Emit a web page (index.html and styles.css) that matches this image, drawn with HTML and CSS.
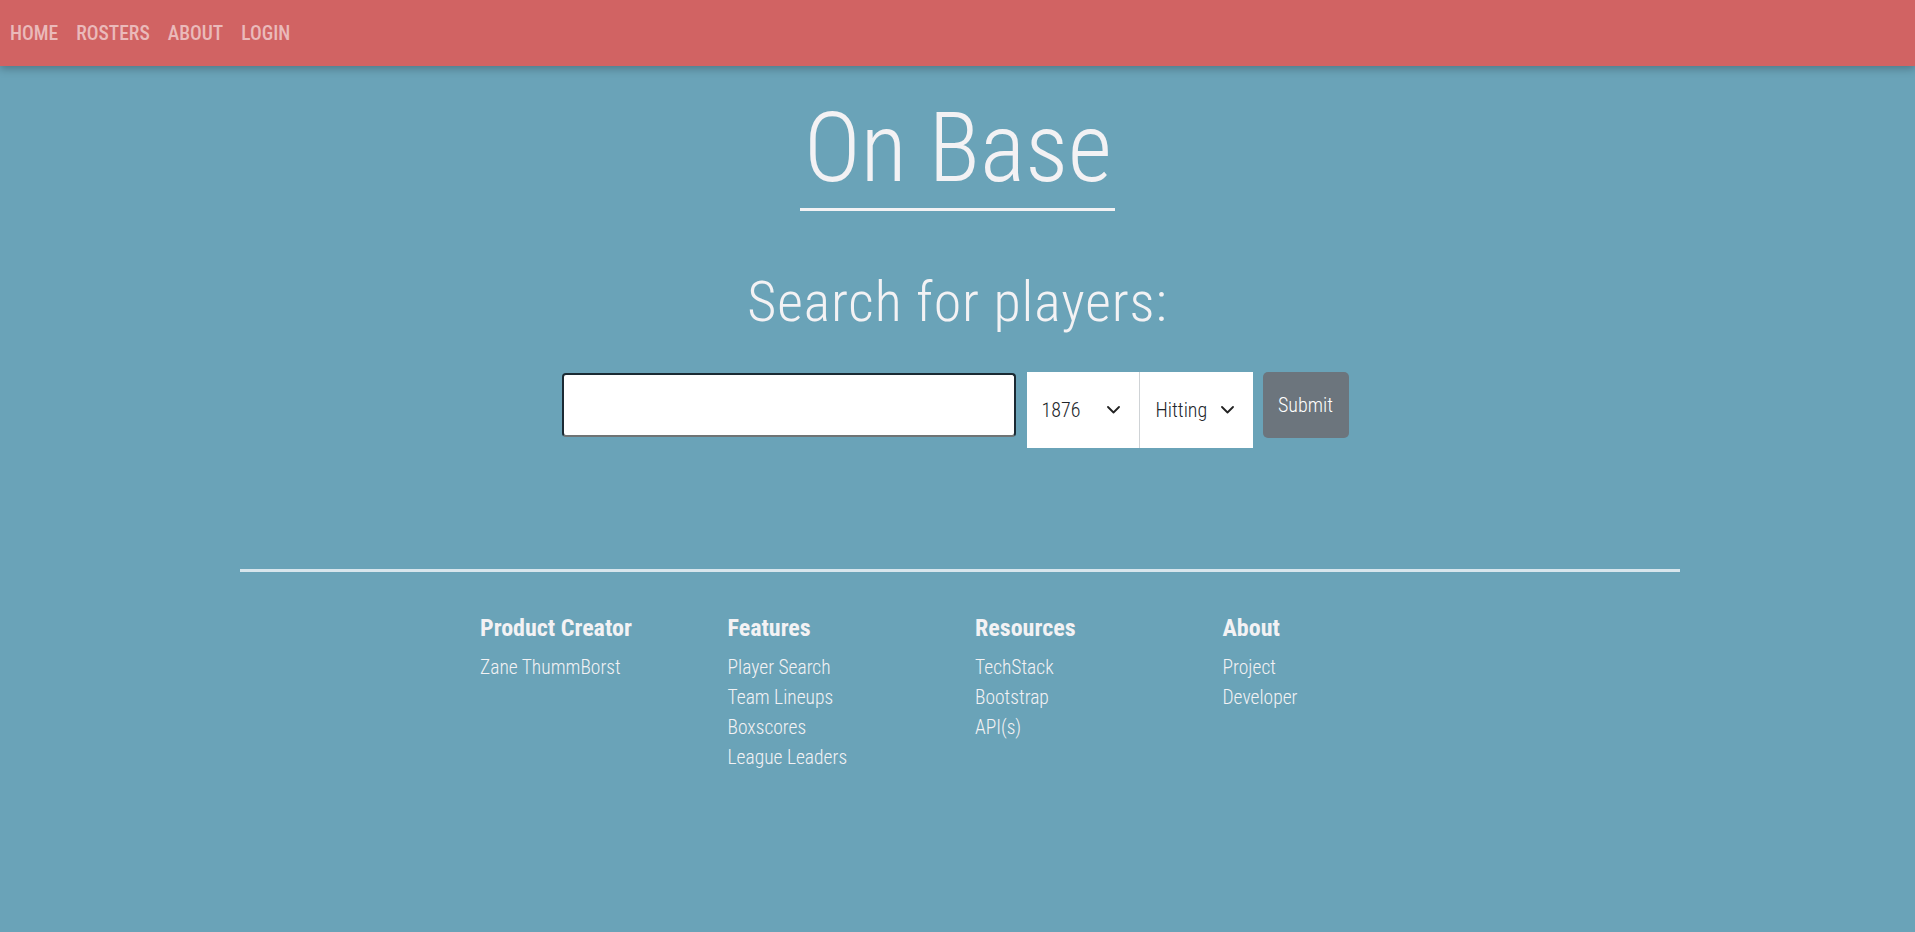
FILE: index.html
```html
<!DOCTYPE html>
<html lang="en">
<head>
<meta charset="utf-8">
<title>On Base</title>
<link rel="stylesheet" href="styles.css">
</head>
<body>
<nav class="navbar">
  <a class="nav-link" href="#">HOME</a>
  <a class="nav-link" href="#">ROSTERS</a>
  <a class="nav-link" href="#">ABOUT</a>
  <a class="nav-link" href="#">LOGIN</a>
</nav>
<main class="main">
  <h1 class="title">On Base</h1>
  <h2 class="subtitle">Search for players:</h2>
  <form class="search-form">
    <input class="search-input" type="text">
    <div class="select-group">
      <div class="select-wrap year">
        <select class="select"><option>1876</option></select>
        <svg class="chev" width="13" height="8" viewBox="0 0 13 8"><path d="M1 1l5.5 5.5L12 1" fill="none" stroke="#222" stroke-width="1.8" stroke-linecap="round" stroke-linejoin="round"/></svg>
      </div>
      <div class="select-wrap type">
        <select class="select"><option>Hitting</option></select>
        <svg class="chev" width="13" height="8" viewBox="0 0 13 8"><path d="M1 1l5.5 5.5L12 1" fill="none" stroke="#222" stroke-width="1.8" stroke-linecap="round" stroke-linejoin="round"/></svg>
      </div>
    </div>
    <button class="submit" type="button">Submit</button>
  </form>
</main>
<footer class="footer">
  <hr class="divider">
  <div class="cols">
    <div class="col">
      <h3 class="col-title">Product Creator</h3>
      <a class="col-link" href="#">Zane ThummBorst</a>
    </div>
    <div class="col">
      <h3 class="col-title">Features</h3>
      <a class="col-link" href="#">Player Search</a>
      <a class="col-link" href="#">Team Lineups</a>
      <a class="col-link" href="#">Boxscores</a>
      <a class="col-link" href="#">League Leaders</a>
    </div>
    <div class="col">
      <h3 class="col-title">Resources</h3>
      <a class="col-link" href="#">TechStack</a>
      <a class="col-link" href="#">Bootstrap</a>
      <a class="col-link" href="#">API(s)</a>
    </div>
    <div class="col">
      <h3 class="col-title">About</h3>
      <a class="col-link" href="#">Project</a>
      <a class="col-link" href="#">Developer</a>
    </div>
  </div>
</footer>
</body>
</html>
```
FILE: styles.css
```css
* { box-sizing: border-box; }
html, body { margin: 0; padding: 0; }
body {
  background: #6aa3b8;
  font-family: "Roboto", "Liberation Sans", sans-serif;
  font-stretch: condensed;
  color: #f3f2f4;
  min-height: 932px;
}
.navbar {
  height: 66px;
  background: #d16363;
  display: flex;
  align-items: center;
  gap: 18px;
  padding-left: 10px;
  box-shadow: 0 3px 8px rgba(0,0,0,0.25);
}
.nav-link {
  color: rgba(255,255,255,0.56);
  text-decoration: none;
  font-size: 19.5px;
  font-weight: 500;
  font-stretch: condensed;
}
.main {
  display: flex;
  flex-direction: column;
  align-items: center;
  padding-top: 25px;
}
.title {
  margin: 0;
  font-size: 96px;
  font-weight: 300;
  line-height: 1.2;
  letter-spacing: 0;
  padding: 0 3px 2px 4px;
  border-bottom: 3px solid #f3f2f4;
}
.subtitle {
  margin: 58px 0 0;
  font-size: 56px;
  font-weight: 300;
  line-height: 1.2;
  letter-spacing: 0.9px;
}
.search-form {
  margin-top: 36px;
  display: flex;
  align-items: flex-start;
  margin-left: -5px;
}
.search-input {
  width: 454px;
  height: 64px;
  margin-top: 1px;
  border: 2px solid #1b2a33;
  border-bottom-color: #6f7475;
  border-radius: 4px;
  background: #fff;
  outline: none;
}
.select-group {
  display: flex;
  margin-left: 11px;
  background: #fff;
}
.select-wrap {
  position: relative;
  height: 76px;
}
.select-wrap.year { width: 112px; }
.select-wrap.type { width: 114px; border-left: 1px solid #cfd3d6; }
.select {
  appearance: none;
  -webkit-appearance: none;
  width: 100%;
  height: 100%;
  border: none;
  background: transparent;
  font-family: "Roboto", "Liberation Sans", sans-serif;
  font-stretch: condensed;
  font-size: 20px;
  font-weight: 300;
  color: #212529;
  padding: 0 0 0 15px;
  outline: none;
}
.type .select { padding-left: 16px; }
.chev {
  position: absolute;
  top: 34px;
  right: 19px;
  pointer-events: none;
}
.submit {
  margin-left: 10px;
  width: 86px;
  height: 66px;
  border: none;
  border-radius: 5px;
  background: #6c757d;
  color: #fff;
  font-family: "Roboto", "Liberation Sans", sans-serif;
  font-stretch: condensed;
  font-size: 20px;
  font-weight: 300;
  padding: 0;
}
.footer {
  padding-top: 121px;
}
.divider {
  width: 1440px;
  margin: 0 0 0 calc(50% - 717.5px);
  border: none;
  height: 3px;
  background: #d7e5ec;
}
.cols {
  display: grid;
  grid-template-columns: repeat(4, 247.5px);
  margin-left: calc(50% - 477.5px);
  margin-top: 42px;
}
.col {
  display: flex;
  flex-direction: column;
}
.col-title {
  margin: 0 0 10px;
  font-size: 24px;
  font-weight: 700;
  line-height: 1.2;
  color: #f3f2f4;
}
.col-link {
  color: #f3f2f4;
  text-decoration: none;
  font-size: 19.5px;
  font-weight: 300;
  line-height: 30px;
}
```
